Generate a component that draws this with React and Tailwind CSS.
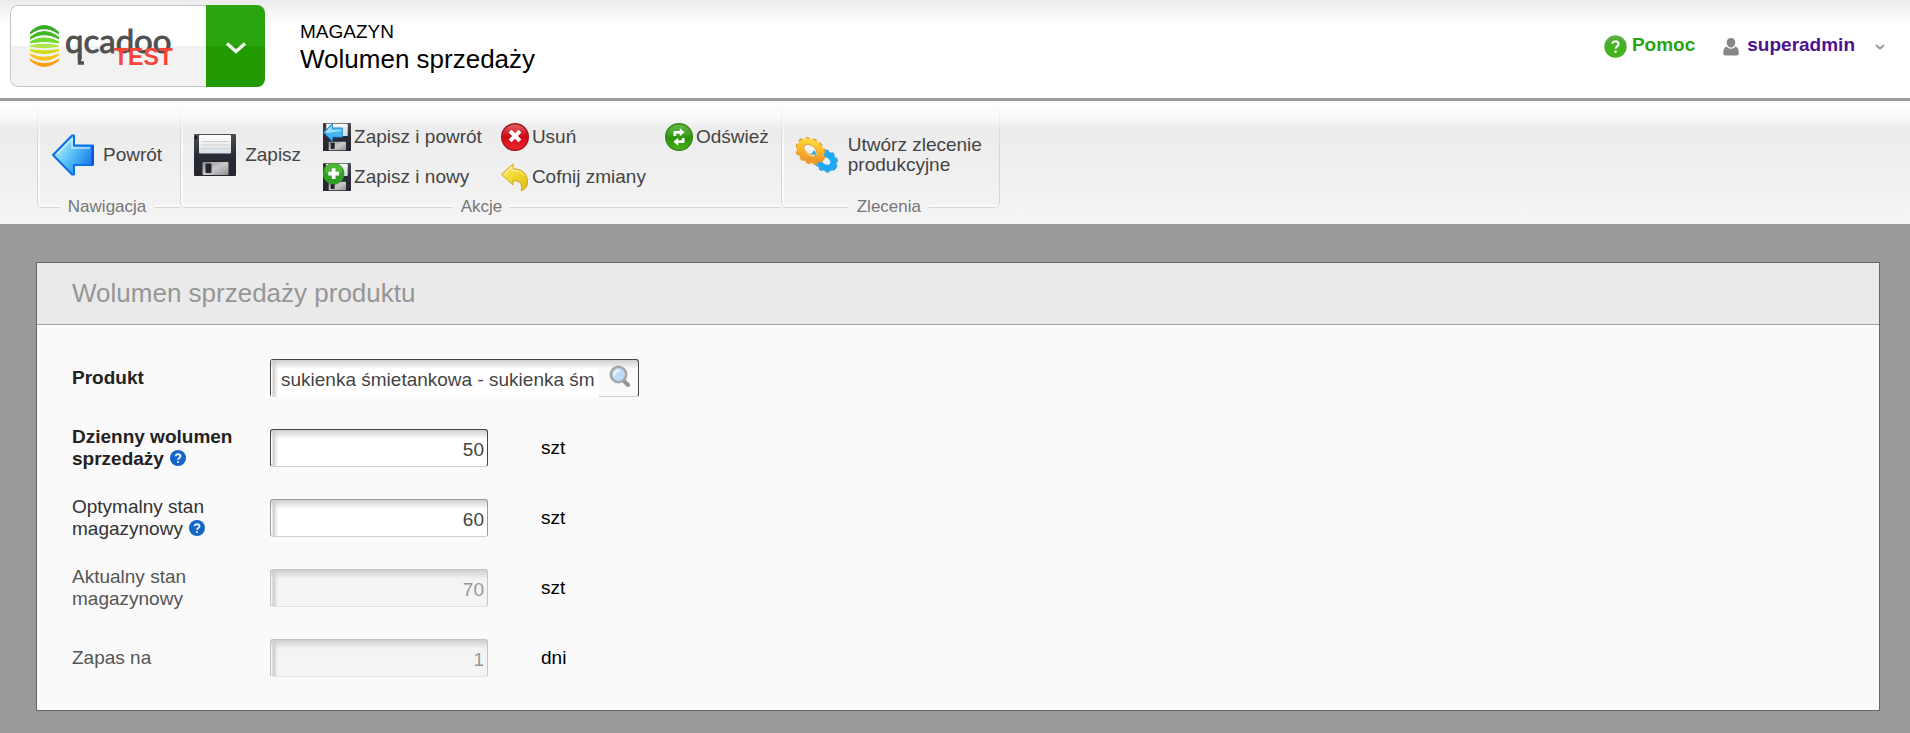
import React from "react";

function Logo() {
  return (
    <svg viewBox="0 0 148 44" className="ml-[18px] h-[44px] w-[148px] overflow-visible" role="img" aria-label="qcadoo TEST">
      <path fill="#36ae22" d="M1 8Q15-6 30 8V10.500Q15 0 1 10.500Z" />
      <path fill="#3fb822" d="M1 13Q15 1 30 13V15.500Q15 7 1 15.500Z" />
      <path fill="#6fdc34" d="M1 17.500Q15 9.500 30 17.500V19.500Q15 16.500 1 19.500Z" />
      <path fill="#b2e648" d="M1 21.200Q15 18.500 30 21.200V22.800Q15 25.500 1 22.800Z" />
      <path fill="#d2dc14" d="M1 25Q15 27.500 30 25V27Q15 33.500 1 27Z" />
      <path fill="#fbc424" d="M1 29.500Q15 36 30 29.500V31.500Q15 42 1 31.500Z" />
      <path fill="#ff9f12" d="M1 34.500Q15 43.500 30 34.500V36.500Q15 49.500 1 36.500Z" />
      <text x="36" y="28.500" fontFamily="Lato, sans-serif" fontSize="33" fill="#505050" stroke="#505050" strokeWidth="0.900">qcadoo</text>
      <path d="M50.500 31V39H55" fill="none" stroke="#505050" strokeWidth="3.400" />
      <text x="85" y="41" fontFamily="'Liberation Sans', Arial, sans-serif" fontWeight="bold" fontSize="23" fill="#fb4438">TEST</text>
    </svg>
  );
}

function ArrowIcon({ className }) {
  return (
    <svg viewBox="0 0 42 42" className={className} aria-hidden="true">
      <defs>
        <linearGradient id="arrowFill" x1="0" y1="0.2" x2="1" y2="0.8">
          <stop offset="0" stopColor="#c9f1ff" />
          <stop offset="0.45" stopColor="#5cc3f8" />
          <stop offset="1" stopColor="#0d6fe6" />
        </linearGradient>
      </defs>
      <path d="M1 21 20 1.500H22V11.500H41V31H22V40.500H20Z" fill="url(#arrowFill)" stroke="#0b6fe8" strokeWidth="2" strokeLinejoin="round" />
      <path d="M5 20 20 5V14H38" fill="none" stroke="#d8f6ff" strokeWidth="1.500" opacity="0.8" />
      <path d="M40.500 12V30.500" stroke="#0a4fd6" strokeWidth="2" />
    </svg>
  );
}

function DiskShape() {
  return (
    <>
      <defs>
        <linearGradient id="diskBody" x1="0" y1="0" x2="0" y2="1">
          <stop offset="0" stopColor="#4c4e54" />
          <stop offset="0.5" stopColor="#2a2c36" />
          <stop offset="1" stopColor="#24252d" />
        </linearGradient>
        <linearGradient id="diskLabel" x1="0" y1="0" x2="0" y2="1">
          <stop offset="0" stopColor="#ffffff" />
          <stop offset="0.6" stopColor="#ebebeb" />
          <stop offset="1" stopColor="#d5dfe8" />
        </linearGradient>
        <linearGradient id="diskMetal" x1="0" y1="0" x2="1" y2="1">
          <stop offset="0" stopColor="#8c8c8c" />
          <stop offset="0.5" stopColor="#c9c9c9" />
          <stop offset="1" stopColor="#8e8e8e" />
        </linearGradient>
      </defs>
      <rect width="42" height="42" rx="1" fill="url(#diskBody)" />
      <rect x="1" y="2" width="2" height="3" fill="#15161b" />
      <rect x="5" y="1" width="32" height="18.500" rx="1" fill="url(#diskLabel)" />
      <path d="M7.500 7.500H35M7.500 11H35M7.500 14.500H35" stroke="#d0d0d0" strokeWidth="1" />
      <rect x="8.500" y="28" width="26" height="13" rx="1" fill="url(#diskMetal)" />
      <rect x="11.500" y="29.500" width="6" height="9.500" rx="1" fill="#23242c" />
    </>
  );
}

function SaveIcon({ className }) {
  return (
    <svg viewBox="0 0 42 42" className={className} aria-hidden="true">
      <DiskShape />
    </svg>
  );
}

function SaveBackIcon({ className }) {
  return (
    <svg viewBox="0 0 42 42" className={className} aria-hidden="true">
      <DiskShape />
      <path d="M1 14 14 1V7.500H29V21H14V27Z" fill="#45b4f2" stroke="#2090e4" strokeWidth="1.500" />
      <path d="M4 13 13 4V10H28V12L6 15Z" fill="#b5e9fd" opacity="0.8" />
    </svg>
  );
}

function SaveNewIcon({ className }) {
  return (
    <svg viewBox="0 0 42 42" className={className} aria-hidden="true">
      <DiskShape />
      <circle cx="16" cy="16" r="16" fill="#2fa022" />
      <ellipse cx="16" cy="10" rx="13" ry="9" fill="#5cc13c" opacity="0.7" />
      <path d="M16 8V24M8 16H24" stroke="#fff" strokeWidth="5.500" />
    </svg>
  );
}

function DeleteIcon({ className }) {
  return (
    <svg viewBox="0 0 28 28" className={className} aria-hidden="true">
      <defs>
        <linearGradient id="delFill" x1="0" y1="0" x2="0" y2="1">
          <stop offset="0" stopColor="#e0656a" />
          <stop offset="0.3" stopColor="#d52d36" />
          <stop offset="0.5" stopColor="#cf0714" />
          <stop offset="1" stopColor="#ee2a34" />
        </linearGradient>
      </defs>
      <circle cx="14" cy="14" r="13.300" fill="url(#delFill)" stroke="#a8141c" strokeWidth="1.400" />
      <path d="M10.500 9.500 17.500 16.500M17.500 9.500 10.500 16.500" stroke="#fff" strokeWidth="4" strokeLinecap="square" />
    </svg>
  );
}

function UndoIcon({ className }) {
  return (
    <svg viewBox="0 0 28 28" className={className} aria-hidden="true">
      <defs>
        <linearGradient id="undoFill" x1="0" y1="0" x2="1" y2="1">
          <stop offset="0" stopColor="#fbf07a" />
          <stop offset="0.5" stopColor="#f0d52c" />
          <stop offset="1" stopColor="#ddb91c" />
        </linearGradient>
      </defs>
      <path d="M0.500 11.500 12 1V6C20 5.500 26.500 10 26.500 19C26.500 24 23.500 27 20 27.500C22 22 19.500 17.500 12 17.500V22Z" fill="url(#undoFill)" stroke="#cfa61c" strokeWidth="1" strokeLinejoin="round" />
      <path d="M3 11.500 11 4V7.500C16 7.500 21 9 23 13" fill="none" stroke="#fff9b8" strokeWidth="1" />
    </svg>
  );
}

function RefreshIcon({ className }) {
  return (
    <svg viewBox="0 0 28 28" className={className} aria-hidden="true">
      <defs>
        <linearGradient id="refFill" x1="0" y1="0" x2="0" y2="1">
          <stop offset="0" stopColor="#6cba50" />
          <stop offset="0.45" stopColor="#379c1c" />
          <stop offset="0.55" stopColor="#2a9408" />
          <stop offset="1" stopColor="#4cb51c" />
        </linearGradient>
      </defs>
      <circle cx="14" cy="14" r="13.300" fill="url(#refFill)" stroke="#2f8a17" strokeWidth="1.400" />
      <path d="M9.800 13V9.300H15.500M18.200 15V18.700H12.500" fill="none" stroke="#fff" strokeWidth="2.800" strokeLinejoin="round" />
      <path d="M14.800 5.300 19.600 9.300 14.800 13.300ZM13.200 14.700 8.400 18.700 13.200 22.700Z" fill="#fff" />
    </svg>
  );
}

function GearsIcon({ className }) {
  return (
    <svg viewBox="0 0 42 42" className={className} aria-hidden="true">
      <defs>
        <linearGradient id="gearGold" x1="0" y1="0" x2="0.6" y2="1">
          <stop offset="0" stopColor="#ffdc44" />
          <stop offset="0.6" stopColor="#fbb423" />
          <stop offset="1" stopColor="#f0982a" />
        </linearGradient>
      </defs>
      <g transform="rotate(35 30 27)">
        <ellipse cx="30" cy="27" rx="10.500" ry="9" fill="none" stroke="#3d9bd4" strokeWidth="4" strokeDasharray="3.500 3" />
        <ellipse cx="30" cy="27" rx="8" ry="6.500" fill="none" stroke="#1eaaf8" strokeWidth="6.500" />
      </g>
      <g transform="rotate(32 14.500 17)">
        <ellipse cx="14.500" cy="17" rx="14.500" ry="11" fill="none" stroke="#dda02c" strokeWidth="3.500" strokeDasharray="4 3" />
        <ellipse cx="14.500" cy="17" rx="11" ry="8" fill="none" stroke="url(#gearGold)" strokeWidth="7" />
        <ellipse cx="13.500" cy="16" rx="7" ry="4.500" fill="#f0f0ee" stroke="#e0a428" strokeWidth="1" />
      </g>
      <path d="M15 20 18.500 16 20.500 20.500Z" fill="#2aa9e8" />
    </svg>
  );
}

function HelpIcon() {
  return (
    <svg viewBox="0 0 23 23" className="mt-1 size-[23px]" aria-hidden="true">
      <defs>
        <radialGradient id="helpFill" cx="0.5" cy="0.7" r="0.7">
          <stop offset="0" stopColor="#3fba10" />
          <stop offset="0.7" stopColor="#45ac2a" />
          <stop offset="1" stopColor="#6cb75c" />
        </radialGradient>
      </defs>
      <circle cx="11.500" cy="11.500" r="11.200" fill="url(#helpFill)" />
      <path d="M8.300 8.800C8.300 5.500 14.600 5.500 14.600 9C14.600 11.300 11.600 11.300 11.500 13.600" fill="none" stroke="#f2faf0" strokeWidth="2.200" />
      <circle cx="11.500" cy="16.700" r="1.300" fill="#f2faf0" />
    </svg>
  );
}

function HintIcon() {
  return (
    <svg viewBox="0 0 16 16" className="mb-1 ml-[6px] inline-block size-4" role="img" aria-label="Podpowiedź">
      <circle cx="8" cy="8" r="8" fill="#1565c8" />
      <path d="M5.600 6.200C5.600 3.600 10.500 3.600 10.500 6.300C10.500 8 8.100 8 8 9.700" fill="none" stroke="#e8f2ff" strokeWidth="1.900" />
      <circle cx="8" cy="12" r="1.100" fill="#e8f2ff" />
    </svg>
  );
}

function SearchIcon() {
  return (
    <svg viewBox="0 0 24 24" className="size-6" aria-hidden="true">
      <path d="M15.500 15.500 20 20" stroke="#949494" strokeWidth="4" strokeLinecap="round" />
      <circle cx="10.500" cy="9.500" r="7.700" fill="#bfdcf7" stroke="#a6a6a6" strokeWidth="2.600" />
      <path d="M6.500 9.500A4 4 0 0 1 10.500 5.500" fill="none" stroke="#eaf5ff" strokeWidth="2.500" strokeLinecap="round" />
    </svg>
  );
}

function RibbonGroup({ label, last, children, className }) {
  return (
    <section aria-label={label} className={`relative flex flex-col ${className}`}>
      <span
        aria-hidden="true"
        className={`pointer-events-none absolute inset-x-0 top-0 bottom-[9px] rounded-bl-[5px] border-b border-l border-[#d6d6d6] shadow-[inset_2px_-2px_0_#fafafa] mask-[linear-gradient(to_bottom,transparent,black_40px)] ${last ? "rounded-br-[5px] border-r" : ""}`}
      />
      <div className="relative flex flex-1 items-center pt-[17px] pb-[6px]">{children}</div>
      <div className="relative self-center bg-[#f3f3f3] px-2 text-[17px] leading-5 text-[#767676]">{label}</div>
    </section>
  );
}

function BigButton({ icon: Icon, gap, children }) {
  return (
    <button type="button" className={`flex items-center pb-1 text-left leading-5 ${gap}`}>
      <Icon className="size-[42px] shrink-0" />
      <span>{children}</span>
    </button>
  );
}

function SmallButton({ icon: Icon, children }) {
  return (
    <button type="button" className="flex h-7 items-center gap-[3px] leading-7 whitespace-nowrap">
      <Icon className="size-7 shrink-0" />
      <span>{children}</span>
    </button>
  );
}

const fieldShade =
  "bg-[linear-gradient(to_bottom,#cfcfcf,transparent_9px),linear-gradient(to_right,transparent_1px,#cccccc_2px,transparent_7px)]";

function Row({ id, label, labelClass, hint, unit, children }) {
  return (
    <div className="flex min-h-11 items-center">
      <label htmlFor={id} className={`w-[198px] shrink-0 pr-6 leading-[22px] ${labelClass}`}>
        {label}
        {hint && <HintIcon />}
      </label>
      {children}
      {unit && <span className="ml-[53px] leading-[22px] text-black">{unit}</span>}
    </div>
  );
}

function NumberField({ id, value, tone, disabled }) {
  return (
    <input
      id={id}
      type="text"
      defaultValue={value}
      disabled={disabled}
      className={`h-[38px] w-[218px] rounded-[3px] border pt-1 pr-[3px] text-right outline-none ${fieldShade} ${tone}`}
    />
  );
}

export default function App() {
  return (
    <div className="flex min-h-screen flex-col bg-[#9a9a9a] font-['Liberation_Sans',Arial,sans-serif] text-[19px]">
      <header className="flex items-start border-b-3 border-[#9c9c9c] bg-white bg-[linear-gradient(to_bottom,#ebebeb,#ffffff_24px)] pt-[5px] pr-[25px] pb-[11px] pl-[10px]">
        <div className="flex h-[82px] w-[255px] shrink-0 overflow-hidden rounded-lg">
          <a href="#" className="flex w-[196px] items-center rounded-l-lg border border-r-0 border-[#c4c4c4] bg-[linear-gradient(to_bottom,#ffffff_50%,#f2f2f2_50%)]">
            <Logo />
          </a>
          <button type="button" aria-label="Menu" className="flex flex-1 items-center justify-center bg-[linear-gradient(to_bottom,#2ba50d_50%,#219a00_50%)]">
            <svg viewBox="0 0 22 14" className="mt-1 h-[14px] w-[22px]" aria-hidden="true">
              <path d="M2 2.500 11 10.500 20 2.500" fill="none" stroke="#f4fbf2" strokeWidth="3.400" />
            </svg>
          </button>
        </div>
        <div className="ml-[35px] pt-4 text-black">
          <div className="leading-[22px]">MAGAZYN</div>
          <h1 className="text-[26px] leading-8">Wolumen sprzedaży</h1>
        </div>
        <nav className="ml-auto flex items-center pt-[26px] font-bold">
          <a href="#" className="flex items-center gap-[5px] leading-[22px] text-[#2ba30f]">
            <HelpIcon />
            Pomoc
          </a>
          <a href="#" className="ml-7 flex items-center gap-2 leading-[22px] text-[#4b128c]">
            <svg viewBox="0 0 16 18" className="mt-1 h-[18px] w-4" aria-hidden="true">
              <path d="M8 0C10.800 0 12.300 2 12.300 4.500C12.300 7 10.500 9.500 8 9.500S3.700 7 3.700 4.500C3.700 2 5.200 0 8 0ZM3.600 8.500C5.500 11.500 10.500 11.500 12.400 8.500C15 9.500 15.800 12 15.800 15.500C15.800 16.800 14.800 17.500 13.500 17.500H2.500C1.200 17.500.2 16.800.2 15.500C.2 12 1 9.500 3.600 8.500Z" fill="#868686" />
            </svg>
            superadmin
            <svg viewBox="0 0 10 8" className="mt-1 ml-3 h-2 w-[10px]" aria-hidden="true">
              <path d="M1 2 5 5.500 9 2" fill="none" stroke="#a0a0a0" strokeWidth="2.200" />
            </svg>
          </a>
        </nav>
      </header>

      <div className="flex bg-[linear-gradient(to_bottom,#ffffff,#f9f9f9_17px,#ececec_27px,#efefef_65px,#f5f5f5)] pt-[5px] pb-[7px] pl-[37px] text-[#444444]">
        <RibbonGroup label="Nawigacja" className="pr-[18px] pl-[15px]">
          <BigButton icon={ArrowIcon} gap="gap-[9px]">Powrót</BigButton>
        </RibbonGroup>
        <RibbonGroup label="Akcje" className="pr-3 pl-[14px]">
          <BigButton icon={SaveIcon} gap="gap-[9px]">Zapisz</BigButton>
          <div className="ml-[22px] flex gap-[19px]">
            <div className="flex flex-col gap-3">
              <SmallButton icon={SaveBackIcon}>Zapisz i powrót</SmallButton>
              <SmallButton icon={SaveNewIcon}>Zapisz i nowy</SmallButton>
            </div>
            <div className="flex flex-col gap-3">
              <SmallButton icon={DeleteIcon}>Usuń</SmallButton>
              <SmallButton icon={UndoIcon}>Cofnij zmiany</SmallButton>
            </div>
            <div className="flex flex-col gap-3">
              <SmallButton icon={RefreshIcon}>Odśwież</SmallButton>
            </div>
          </div>
        </RibbonGroup>
        <RibbonGroup label="Zlecenia" last className="pr-[18px] pl-[15px]">
          <BigButton icon={GearsIcon} gap="gap-[10px]">
            Utwórz zlecenie
            <br />
            produkcyjne
          </BigButton>
        </RibbonGroup>
      </div>

      <main className="pt-[38px] pr-[30px] pb-[22px] pl-9">
        <section className="border border-[#666666] bg-[#fafafa]">
          <h2 className="border-b border-[#a3a3a3] bg-[#eaeaea] px-[35px] py-[15px] text-[26px] leading-[31px] text-[#969696]">
            Wolumen sprzedaży produktu
          </h2>
          <form className="flex flex-col gap-[26px] px-[35px] pt-[31px] pb-[30px]">
            <Row id="product" label="Produkt" labelClass="font-bold text-[#222222]">
              <div className={`flex h-[38px] w-[369px] rounded-[3px] border border-[#444444] border-b-[#d0d0d0] ${fieldShade}`}>
                <input
                  id="product"
                  type="text"
                  defaultValue="sukienka śmietankowa - sukienka śm"
                  className={`-mb-px min-w-0 flex-1 bg-white pt-1 pl-[10px] text-[#444444] outline-none ${fieldShade}`}
                />
                <button type="button" aria-label="Szukaj" className="flex w-[39px] items-center justify-end pr-[6px] pb-[2px]">
                  <SearchIcon />
                </button>
              </div>
            </Row>
            <Row id="daily" label="Dzienny wolumen sprzedaży" labelClass="font-bold text-[#222222]" hint unit="szt">
              <NumberField id="daily" value="50" tone="border-[#444444] border-b-[#d0d0d0] bg-white text-[#444444]" />
            </Row>
            <Row id="optimal" label="Optymalny stan magazynowy" labelClass="text-[#333333]" hint unit="szt">
              <NumberField id="optimal" value="60" tone="border-[#999999] border-b-[#d0d0d0] bg-white text-[#444444]" />
            </Row>
            <Row id="current" label="Aktualny stan magazynowy" labelClass="text-[#555555]" unit="szt">
              <NumberField id="current" value="70" disabled tone="border-[#c4c4c4] border-b-[#e2e2e2] bg-[#f4f4f4] text-[#999999]" />
            </Row>
            <Row id="stock" label="Zapas na" labelClass="text-[#555555]" unit="dni">
              <NumberField id="stock" value="1" disabled tone="border-[#c4c4c4] border-b-[#e2e2e2] bg-[#f4f4f4] text-[#999999]" />
            </Row>
          </form>
        </section>
      </main>
    </div>
  );
}
